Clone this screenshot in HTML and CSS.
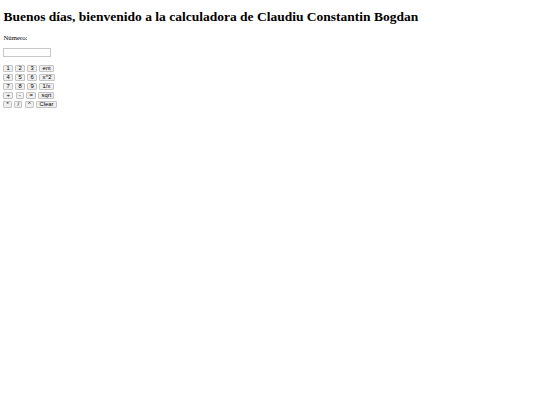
FILE: index.html
```html
<!DOCTYPE html>
<html lang="es">
<head>
<meta charset="utf-8">
<title>Calculadora</title>
<link rel="stylesheet" href="styles.css">
</head>
<body>
<h1 class="title">Buenos días, bienvenido a la calculadora de Claudiu Constantin Bogdan</h1>
<p class="label">Número:</p>
<input class="num" type="text">
<div class="keys">
  <div class="row"><button class="key">1</button><button class="key">2</button><button class="key">3</button><button class="key">ent</button></div>
  <div class="row"><button class="key">4</button><button class="key">5</button><button class="key">6</button><button class="key">x^2</button></div>
  <div class="row"><button class="key">7</button><button class="key">8</button><button class="key">9</button><button class="key">1/x</button></div>
  <div class="row"><button class="key">+</button><button class="key">-</button><button class="key">=</button><button class="key">sqrt</button></div>
  <div class="row"><button class="key">*</button><button class="key">/</button><button class="key">^</button><button class="key">Clear</button></div>
</div>
</body>
</html>
```
FILE: styles.css
```css
html, body {
  background: #ffffff;
}
body {
  margin: 3.4px;
  font-family: "Liberation Serif", "Times New Roman", serif;
  font-size: 6.75px;
  color: #000000;
}
.title {
  font-size: 13.5px;
  font-weight: bold;
  margin: 5.6px 0 9.05px;
}
.label {
  margin: 6.75px 0;
}
.num {
  display: block;
  box-sizing: border-box;
  width: 48px;
  height: 9px;
  margin: 0;
  padding: 0;
  border: 1px solid #c8c8c8;
  background: #fff;
}
.keys {
  margin-top: 7.8px;
  display: flex;
  flex-direction: column;
  gap: 1.8px;
}
.row {
  display: flex;
  gap: 2.4px;
}
.key {
  box-sizing: border-box;
  height: 7.2px;
  min-width: 7.5px;
  margin: 0;
  padding: 0 2.2px;
  font-family: "Liberation Sans", Arial, sans-serif;
  font-size: 5.8px;
  line-height: 1;
  color: #000;
  background: #efefef;
  border: 1px solid #c4c4c4;
  border-radius: 1px;
}
```
